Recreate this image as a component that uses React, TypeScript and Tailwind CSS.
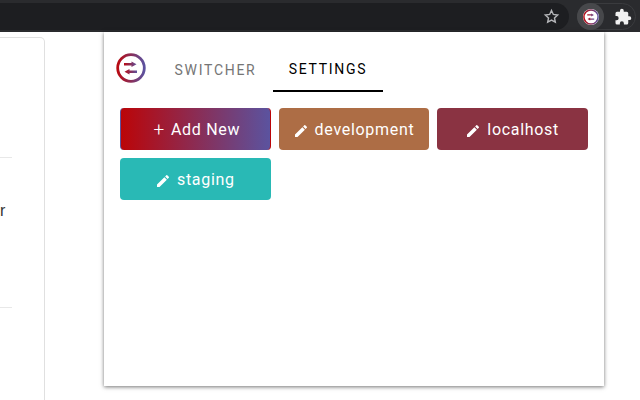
const font = { fontFamily: "Roboto, sans-serif" };

function Pencil() {
  return (
    <svg viewBox="0 0 24 24" className="w-[16px] h-[16px] mr-[6px] -ml-px mt-px fill-white shrink-0">
      <path d="M3 17.25V21h3.75L17.81 9.94l-3.75-3.75L3 17.25zM20.71 7.04a1 1 0 0 0 0-1.41l-2.34-2.34a1 1 0 0 0-1.41 0l-1.83 1.83 3.75 3.75 1.83-1.83z" />
    </svg>
  );
}

function Logo({ size, id }: { size: number; id: string }) {
  return (
    <svg viewBox="0 0 30 30" width={size} height={size}>
      <defs>
        <linearGradient id={id} x1="0" y1="0" x2="1" y2="0">
          <stop offset="0" stopColor="#b80a12" />
          <stop offset="1" stopColor="#5c529f" />
        </linearGradient>
      </defs>
      <circle cx="15" cy="15" r="13.3" fill="none" stroke={`url(#${id})`} strokeWidth="2.8" />
      <path
        d="M8 10h7.5V8.4l5 2.8-5 2.8v-1.6H8zM21 17.6h-7.5V16l-5 2.8 5 2.8V20H21z"
        fill={`url(#${id})`}
      />
    </svg>
  );
}

const envs = [
  { name: "development", color: "bg-[#ad6d45]" },
  { name: "localhost", color: "bg-[#8a3342]" },
  { name: "staging", color: "bg-[#29b9b5]" },
];

export default function App() {
  return (
    <div className="relative w-[640px] h-[400px] overflow-hidden bg-white antialiased" style={font}>
      {/* browser toolbar */}
      <div className="h-[32px] bg-[#2a2b2e] pt-[3px] flex items-start">
        <div className="flex-1 h-[27px] bg-[#1d1e21] rounded-r-full flex items-center justify-end pr-[9px]">
          <svg viewBox="0 0 24 24" className="w-[17px] h-[17px] fill-none stroke-[#b4b5b8] stroke-[2]">
            <path d="M12 3.5l2.6 5.6 6.1.7-4.5 4.2 1.2 6-5.4-3-5.4 3 1.2-6-4.5-4.2 6.1-.7z" />
          </svg>
        </div>
        <div className="w-[71px] h-[27px] flex items-center pl-[8px]">
          <div className="flex-1 h-[27px] mr-[4px] rounded-full border border-[#3a3b3e] flex items-center gap-[10px]">
            <div className="w-[27px] h-[27px] -ml-px rounded-full bg-[#47484b] flex items-center justify-center">
              <div className="w-[16px] h-[16px] rounded-full bg-white flex items-center justify-center">
                <Logo size={16} id="logo-small" />
              </div>
            </div>
            <svg viewBox="0 0 24 24" className="w-[18px] h-[18px] fill-[#f1f1f1]">
              <path d="M20.5 11H19V7a2 2 0 0 0-2-2h-4V3.5a2.5 2.5 0 0 0-5 0V5H4a2 2 0 0 0-2 2v3.8h1.5a2.7 2.7 0 0 1 0 5.4H2V20a2 2 0 0 0 2 2h3.8v-1.5a2.7 2.7 0 0 1 5.4 0V22H17a2 2 0 0 0 2-2v-4h1.5a2.5 2.5 0 0 0 0-5z" />
            </svg>
          </div>
        </div>
      </div>

      {/* page behind popup */}
      <div className="mt-[5px] w-[45px] h-[400px] border border-l-0 border-[#e0e0e0] rounded-tr-[5px] pt-[119px]">
        <div className="h-px w-[12px] bg-[#e8e8e8]" />
        <div
          className="h-[149px] pt-[42px] text-[16px] leading-[22px] text-[#333]"
          style={{ fontFamily: "'Liberation Sans', sans-serif" }}
        >
          r
        </div>
        <div className="h-px w-[12px] bg-[#e8e8e8]" />
      </div>

      {/* extension popup */}
      <div className="absolute left-[104px] top-[32px] w-[500px] h-[354px] bg-white shadow-[0_1px_4px_rgba(0,0,0,0.55)] px-[16px]">
        <div className="flex items-start -ml-[4px] pt-[21px]">
          <div className="w-[30px] h-[30px]">
            <Logo size={30} id="logo-main" />
          </div>
          <div className="flex ml-[12px] -mt-[21px] h-[60px]">
            <div className="w-[115px] h-[60px] pt-[16px] flex items-center justify-center text-[14px] tracking-[1.7px] text-[#757575]">
              SWITCHER
            </div>
            <div className="w-[110px] h-[60px] pt-[16px] flex items-center justify-center text-[14px] tracking-[1.7px] text-black border-b-2 border-black">
              SETTINGS
            </div>
          </div>
        </div>

        <div className="grid grid-cols-3 gap-[8px] mt-[16px]">
          <button className="h-[42px] pt-[2px] pl-[3px] rounded-[4px] flex items-center justify-center text-white text-[16px] tracking-[0.7px] bg-[linear-gradient(90deg,#bb0508,#5b539f)] border-l border-r border-l-[#5b539f] border-r-[#bb0508]">
            <span className="mr-[6px] font-light text-[19px] leading-[20px]">+</span>Add New
          </button>
          {envs.map((env) => (
            <button
              key={env.name}
              className={`h-[42px] pt-[2px] rounded-[4px] flex items-center justify-center text-white text-[16px] tracking-[0.7px] ${env.color}`}
            >
              <Pencil />
              {env.name}
            </button>
          ))}
        </div>
      </div>
    </div>
  );
}
